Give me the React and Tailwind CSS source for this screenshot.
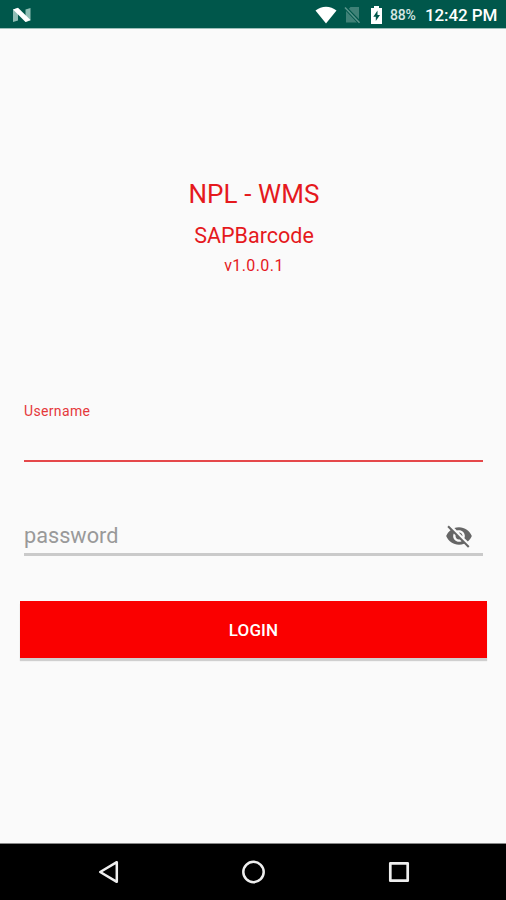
function StatusBar() {
  return (
    <header className="flex h-[28px] shrink-0 items-center bg-[#00574b] pr-[9px] pl-[12px] text-white">
      <svg width="20" height="16" viewBox="0 0 20 16" className="mt-[2px]">
        <path d="M1 2.500 6 1v12.500L1 15ZM13.500 2.500 18.500 1v12.500l-5 1.500Z" fill="#8fbdb4" />
        <path d="M1 2.500 6 .8 18.500 13 13.500 15Z" fill="#fff" />
      </svg>
      <div className="ml-auto flex items-center">
        <svg width="22" height="18" viewBox="0 0 22 18" className="mt-[2px]">
          <path d="M11 17.500.5 4.600C6.500-.5 15.500-.5 21.500 4.600Z" fill="#fff" />
        </svg>
        <svg width="17" height="18" viewBox="0 0 17 18" className="ml-[7px] mt-[2px]">
          <path d="M6.500 1H15V13.200L4.800 2.800ZM2 5 13 16.500H2Z" fill="#3f8177" />
          <path d="M1 1.500 15.500 16.800" stroke="#5b968d" strokeWidth="1.500" />
        </svg>
        <svg width="13" height="18" viewBox="0 0 13 18" className="mt-[2px] ml-[9px]">
          <path d="M4 0h5v2h3v16H1V2h3Z" fill="#fff" />
          <path d="M7.500 4.500 3.300 10.700h2.500V15L10 9H7.500Z" fill="#00574b" />
        </svg>
        <span className="ml-[7px] w-[28px] text-[14px] leading-[28px] font-medium tracking-[-0.2px] text-[#d5e5e2]">
          <span className="relative top-[1px]">88%</span>
        </span>
        <span className="ml-[7px] w-[72px] text-[17px] leading-[30px] font-medium tracking-[-0.1px] whitespace-nowrap">
          <span className="relative top-[1px]">12:42 PM</span>
        </span>
      </div>
    </header>
  );
}

function VisibilityOffIcon() {
  return (
    <svg width="28" height="28" viewBox="0 0 24 24" fill="#666">
      <path d="M12 7c2.760 0 5 2.240 5 5 0 .65-.13 1.260-.36 1.830l2.920 2.920c1.510-1.260 2.700-2.890 3.430-4.750-1.730-4.390-6-7.500-11-7.500-1.400 0-2.740.25-3.980.7l2.160 2.160C10.740 7.130 11.350 7 12 7zM2 4.270l2.280 2.280.46.46C3.080 8.300 1.780 10.020 1 12c1.730 4.390 6 7.500 11 7.500 1.550 0 3.030-.3 4.380-.84l.42.42L19.730 22 21 20.730 3.270 3 2 4.270zM7.530 9.800l1.550 1.550c-.05.21-.08.43-.08.65 0 1.660 1.340 3 3 3 .22 0 .44-.03.65-.08l1.550 1.550c-.67.33-1.410.53-2.200.53-2.760 0-5-2.240-5-5 0-.79.2-1.530.53-2.200zm4.310-.78l3.150 3.150.02-.16c0-1.660-1.340-3-3-3l-.17.01z" />
    </svg>
  );
}

function NavigationBar() {
  return (
    <nav className="flex h-[57px] shrink-0 items-center justify-between border-t border-[#888] bg-black px-[96px]">
      <svg width="24" height="26" viewBox="0 0 24 26" fill="none" stroke="#eee" strokeWidth="2.500" strokeLinejoin="round">
        <path d="M20.800 3.200V22.800L4.200 13Z" />
      </svg>
      <svg width="26" height="26" viewBox="0 0 26 26" fill="none" stroke="#eee" strokeWidth="2.500">
        <circle cx="13.500" cy="13" r="10.200" />
      </svg>
      <svg width="24" height="26" viewBox="0 0 24 26" fill="none" stroke="#eee" strokeWidth="2.700" strokeLinejoin="round">
        <rect x="4.300" y="4.300" width="17.400" height="17.400" />
      </svg>
    </nav>
  );
}

export default function App() {
  return (
    <div className="flex h-[900px] w-[506px] flex-col overflow-hidden bg-[#fafafa] font-['Roboto',sans-serif]">
      <StatusBar />
      <main className="flex flex-1 flex-col border-t border-[#9dbfba]">
        <div className="mt-[147px] flex flex-col items-center pl-[2px] text-[#e5191d]">
          <h1 className="text-[26px] leading-[36px] tracking-[0.1px]">NPL - WMS</h1>
          <h2 className="mt-[9px] text-[21.500px] leading-[30px]">SAPBarcode</h2>
          <p className="mt-[3px] text-[16px] leading-[24px] tracking-[0.4px]">v1.0.0.1</p>
        </div>
        <div className="mr-[23px] ml-[24px] mt-[123px] flex h-[61px] flex-col border-b-2 border-[#e5484a]">
          <label className="text-[14px] leading-[20px] tracking-[0.35px] text-[#e5383b]">Username</label>
        </div>
        <div className="mr-[23px] ml-[24px] mt-[57px] flex h-[37px] items-center justify-between border-b-[3px] border-[#cacaca] pr-[10px]">
          <span className="text-[21.700px] leading-[30px] text-[#999]">password</span>
          <VisibilityOffIcon />
        </div>
        <button className="mt-[45px] mr-[19px] ml-[20px] h-[57px] bg-[#fa0000] pt-[2px] text-[17px] font-medium tracking-[0.1px] text-white shadow-[0_3px_1px_#cfcfcf]">
          LOGIN
        </button>
      </main>
      <NavigationBar />
    </div>
  );
}
